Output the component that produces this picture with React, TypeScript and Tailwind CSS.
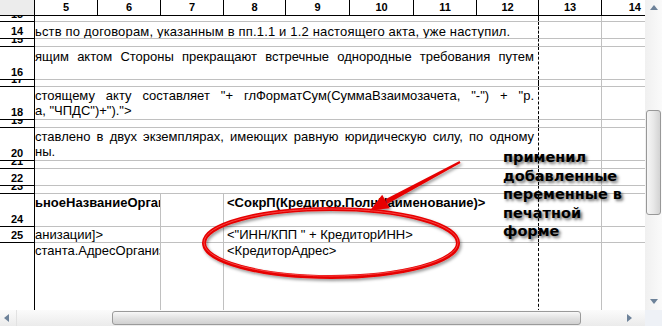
import type { ReactNode } from "react";

const body = "font-['Liberation_Sans',Arial,sans-serif] text-[13px] text-black";

const headerCols = [
  { label: "5", w: "w-[63px]" },
  { label: "6", w: "w-[63px]" },
  { label: "7", w: "w-[63px]" },
  { label: "8", w: "w-[62px]" },
  { label: "9", w: "w-[64px]" },
  { label: "10", w: "w-[64px]" },
  { label: "11", w: "w-[63px]" },
  { label: "12", w: "w-[62px]" },
  { label: "13", w: "w-[63px]" },
];

function Row({ n, h, children }: { n: number; h: string; children?: ReactNode }) {
  return (
    <div className={`flex shrink-0 ${h}`}>
      <div className="flex w-[35px] shrink-0 items-end justify-center overflow-hidden border-r border-b border-black bg-white">
        <span className="font-['Liberation_Sans',Arial,sans-serif] text-[11px] leading-[13px] font-bold">
          {n}
        </span>
      </div>
      <div className="flex w-[610px] shrink-0 border-b border-[#c0c0c0]">
        <div className="w-[503px] shrink-0 overflow-hidden">{children}</div>
        <div className="w-[63px] shrink-0 border-l border-dashed border-black" />
        <div className="w-[44px] shrink-0 border-l border-[#c0c0c0]" />
      </div>
    </div>
  );
}

function Justified({ lines, pad = "pb-[1px]" }: { lines: [string, string]; pad?: string }) {
  return (
    <div className={`flex h-full flex-col justify-end ${pad} ${body} leading-[15px]`}>
      <div className="w-[499px] text-justify [text-align-last:justify]">{lines[0]}</div>
      <div className="whitespace-nowrap">{lines[1] || "\u00a0"}</div>
    </div>
  );
}

function SplitCells({ a, b, bold, align }: { a: string; b: string; bold?: boolean; align: string }) {
  const weight = bold ? "font-bold" : "";
  return (
    <div className={`flex h-full ${body} ${weight} leading-[14px]`}>
      <div className={`flex w-[125px] shrink-0 overflow-hidden whitespace-nowrap ${align}`}>{a}</div>
      <div className="w-[63px] shrink-0 border-l border-[#c0c0c0]" />
      <div className={`flex w-[315px] shrink-0 overflow-hidden whitespace-nowrap border-l border-[#c0c0c0] pl-[3px] ${align}`}>
        {b}
      </div>
    </div>
  );
}

function Overlay() {
  return (
    <svg className="pointer-events-none absolute top-0 left-0" width="645" height="310">
      <defs>
        <filter id="sh" x="-20%" y="-20%" width="140%" height="140%">
          <feDropShadow dx="1.5" dy="2" stdDeviation="1.8" floodColor="#000" floodOpacity="0.4" />
        </filter>
      </defs>
      <g filter="url(#sh)">
        <ellipse cx="331" cy="243" rx="127" ry="34" fill="none" stroke="#e60000" strokeWidth="4" />
        <ellipse cx="331" cy="242.5" rx="127" ry="33.5" fill="none" stroke="#ff7a7a" strokeWidth="1" opacity="0.55" />
        <polygon points="460.5,163 459.5,161.1 385.9,199 387.1,204" fill="#e60000" />
        <polygon points="370,210.5 382.2,194.8 389.8,208.2" fill="#e60000" />
      </g>
    </svg>
  );
}

function UpArrow() {
  return (
    <svg width="8" height="5" viewBox="0 0 8 5">
      <polygon points="0,5 4,0 8,5" fill="#6d8299" />
    </svg>
  );
}
function DownArrow() {
  return (
    <svg width="8" height="5" viewBox="0 0 8 5">
      <polygon points="0,0 8,0 4,5" fill="#6d8299" />
    </svg>
  );
}
function LeftArrow() {
  return (
    <svg width="5" height="8" viewBox="0 0 5 8">
      <polygon points="5,0 5,8 0,4" fill="#6d8299" />
    </svg>
  );
}
function RightArrow() {
  return (
    <svg width="5" height="8" viewBox="0 0 5 8">
      <polygon points="0,0 5,4 0,8" fill="#6d8299" />
    </svg>
  );
}

export default function App() {
  return (
    <div className="flex h-[326px] w-[662px] flex-col overflow-hidden bg-white">
      <div className="flex h-[310px] shrink-0">
        <div className="relative h-[310px] w-[645px] shrink-0 overflow-hidden">
          {/* column header */}
          <div className="flex h-[16px] shrink-0 border-b border-black">
            <div className="w-[35px] shrink-0 border-r border-black bg-[#ececec]" />
            {headerCols.map((c) => (
              <div
                key={c.label}
                className={`${c.w} flex shrink-0 items-center justify-center border-r border-black font-['Liberation_Sans',Arial,sans-serif] text-[11px] leading-[13px] font-bold`}
              >
                {c.label}
              </div>
            ))}
            <div className="flex w-[43px] shrink-0 items-center justify-end pr-[4px] font-['Liberation_Sans',Arial,sans-serif] text-[11px] leading-[13px] font-bold">
              14
            </div>
          </div>

          <Row n={13} h="h-[6px]" />
          <Row n={14} h="h-[17px]">
            <div className={`flex h-full items-end whitespace-nowrap ${body} leading-[13px] tracking-[0.17px]`}>
              ьств по договорам, указанным в пп.1.1 и 1.2 настоящего акта, уже наступил.
            </div>
          </Row>
          <Row n={15} h="h-[8px]" />
          <Row n={16} h="h-[33px]">
            <Justified pad="pb-0" lines={["ящим актом Стороны прекращают встречные однородные требования путем", ""]} />
          </Row>
          <Row n={17} h="h-[7px]" />
          <Row n={18} h="h-[33px]">
            <Justified
              lines={['стоящему акту составляет "+ глФорматСум(СуммаВзаимозачета, "-") + "р.', 'а, "ЧПДС")+").">']}
            />
          </Row>
          <Row n={19} h="h-[8px]" />
          <Row n={20} h="h-[33px]">
            <Justified lines={["ставлено в двух экземплярах, имеющих равную юридическую силу, по одному", "ны."]} />
          </Row>
          <Row n={21} h="h-[8px]" />
          <Row n={22} h="h-[17px]" />
          <Row n={23} h="h-[8px]" />
          <Row n={24} h="h-[33px]">
            <SplitCells
              bold
              align="items-start pt-[2px]"
              a="ьноеНазваниеОрганизации"
              b="<СокрП(Кредитор.ПолнНаименование)>"
            />
          </Row>
          <Row n={25} h="h-[16px]">
            <SplitCells align="items-end" a="анизации]>" b='<"ИНН/КПП " + КредиторИНН>' />
          </Row>
          <Row n={26} h="h-[80px]">
            <SplitCells align="items-start pt-[1px]" a="станта.АдресОрганизации" b="<КредиторАдрес>" />
          </Row>

          <Overlay />

          <div className="absolute top-[148px] left-[503px] font-['DejaVu_Sans',Verdana,sans-serif] text-[14.5px] leading-[18.5px] font-bold text-black [text-shadow:2px_2px_3px_rgba(0,0,0,0.6)]">
            применил
            <br />
            добавленные
            <br />
            переменные в
            <br />
            печатной
            <br />
            форме
          </div>
        </div>

        {/* vertical scrollbar */}
        <div className="flex h-[310px] w-[17px] shrink-0 flex-col bg-linear-to-r from-[#f0f0f0] to-[#fafafa]">
          <div className="flex h-[15px] shrink-0 items-center justify-center">
            <UpArrow />
          </div>
          <div className="h-[95px] shrink-0" />
          <div className="mx-[1px] h-[105px] shrink-0 rounded-[3px] border border-[#989898] bg-linear-to-r from-[#f6f6f6] via-[#e8e8e8] to-[#d3d3d3]" />
          <div className="flex-1" />
          <div className="flex h-[18px] shrink-0 items-center justify-center">
            <DownArrow />
          </div>
        </div>
      </div>

      {/* horizontal scrollbar */}
      <div className="flex h-[16px] shrink-0">
        <div className="flex w-[645px] shrink-0 bg-linear-to-b from-[#fbfbfb] to-[#ebebeb]">
          <div className="flex w-[17px] shrink-0 items-center justify-center border-r border-[#e2e2e2] pr-[4px]">
            <LeftArrow />
          </div>
          <div className="w-[95px] shrink-0" />
          <div className="my-[1px] w-[469px] shrink-0 rounded-[3px] border border-[#9a9a9a] bg-linear-to-b from-[#f8f8f8] via-[#e2e2e2] to-[#d0d0d0]" />
          <div className="flex-1" />
          <div className="flex w-[20px] shrink-0 items-center justify-start pl-[2px]">
            <RightArrow />
          </div>
        </div>
        <div className="w-[17px] shrink-0 bg-[#eef1f6]" />
      </div>
    </div>
  );
}
